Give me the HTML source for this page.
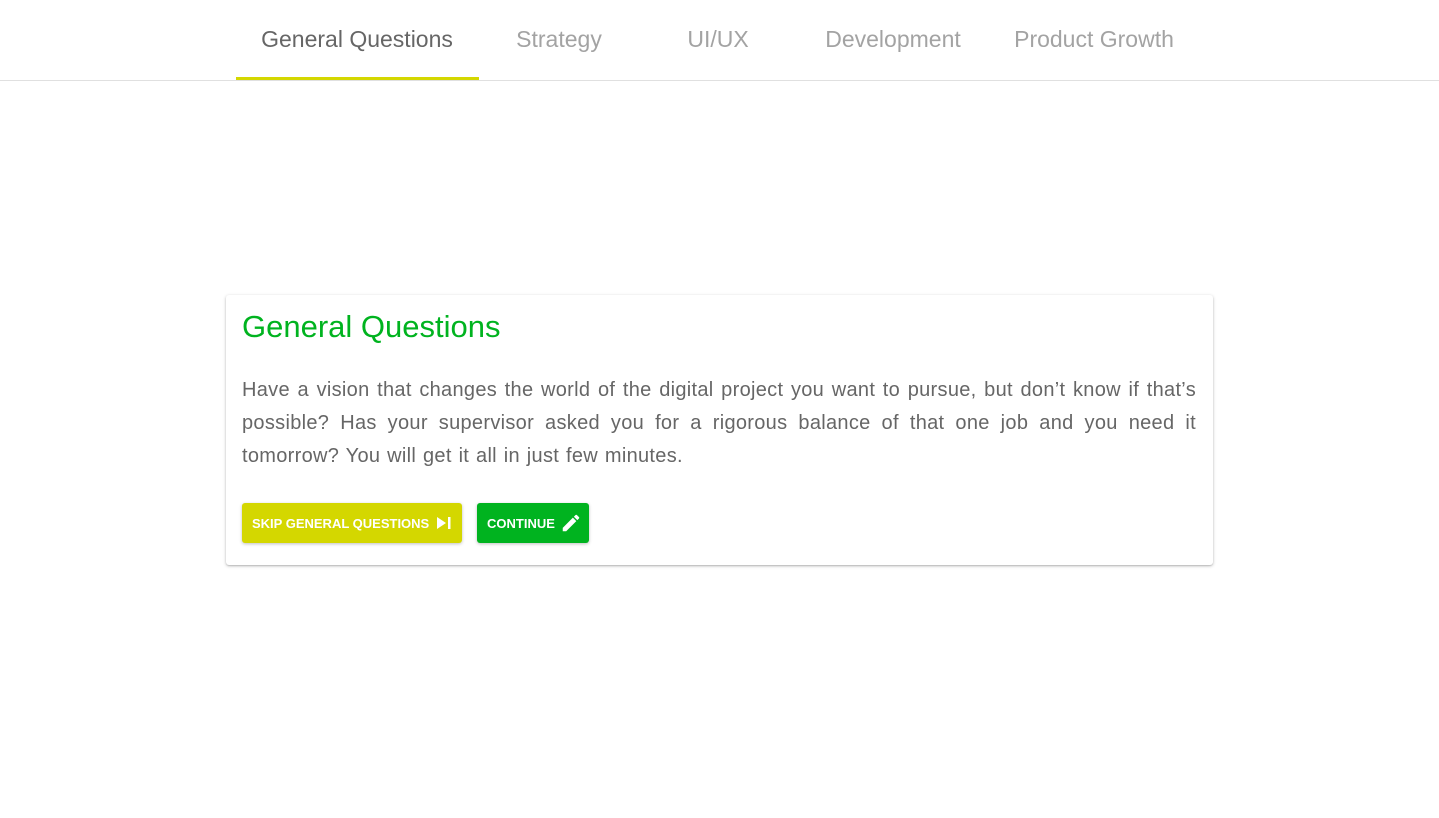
<!DOCTYPE html>
<html><head><meta charset="utf-8"><style>
body{margin:0;width:1439px;height:818px;background:#fff;font-family:"Liberation Sans",Arial,sans-serif;position:relative;overflow:hidden}
.nav{position:absolute;left:0;top:0;width:1439px;height:80px;border-bottom:1px solid #e0e0e0}
.t{position:absolute;top:26px;font-size:23px;color:#a3a3a3;transform:translateX(-50%);white-space:nowrap;letter-spacing:0px}
.ind{position:absolute;left:236px;top:77px;width:243px;height:3px;background:#d4d700}
.card{position:absolute;left:226px;top:295px;width:987px;height:270px;background:#fff;border-radius:3px;box-shadow:0 1px 3px rgba(0,0,0,.25),0 1px 1px rgba(0,0,0,.1)}
h1{position:absolute;left:16px;top:14px;margin:0;font-weight:normal;font-size:31px;color:#00b31f}
p{position:absolute;left:16px;top:79px;width:954px;margin:0;font-size:20px;line-height:33px;color:#666;text-align:justify;letter-spacing:0.3px;word-spacing:1px}
.b{position:absolute;top:208px;height:40px;border-radius:3px;color:#fff;font-weight:bold;font-size:13px;display:flex;align-items:center;box-shadow:0 1px 3px rgba(0,0,0,.25)}
</style></head><body>
<div class="nav">
<span class="t" style="left:357px;color:#666">General Questions</span>
<span class="t" style="left:559px">Strategy</span>
<span class="t" style="left:718px">UI/UX</span>
<span class="t" style="left:893px">Development</span>
<span class="t" style="left:1094px">Product Growth</span>
<div class="ind"></div>
</div>
<div class="card">
<h1>General Questions</h1>
<p>Have a vision that changes the world of the digital project you want to pursue, but don’t know if that’s possible? Has your supervisor asked you for a rigorous balance of that one job and you need it tomorrow? You will get it all in just few minutes.</p>
<div class="b" style="left:16px;width:220px;background:#d4d700"><span style="margin-left:10px">SKIP GENERAL QUESTIONS</span>
<svg width="16" height="16" viewBox="0 0 16 16" style="margin-left:7px"><path d="M1 2l9 6-9 6z" fill="#fff"/><rect x="12" y="2" width="2.5" height="12" fill="#fff"/></svg></div>
<div class="b" style="left:251px;width:112px;background:#00b31f"><span style="margin-left:10px">CONTINUE</span>
<svg width="22" height="22" viewBox="0 0 24 24" style="margin-left:5px"><path d="M3 17.25V21h3.75L17.81 9.94l-3.75-3.75L3 17.25zM20.71 7.04a1 1 0 000-1.41l-2.34-2.34a1 1 0 00-1.41 0l-1.83 1.83 3.75 3.75 1.83-1.83z" fill="#fff"/></svg></div>
</div>
</body></html>
